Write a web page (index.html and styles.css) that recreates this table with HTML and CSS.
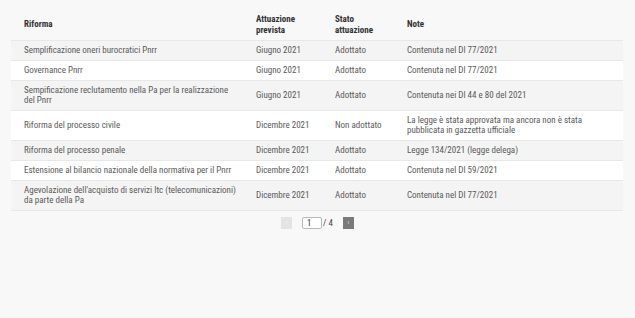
FILE: index.html
```html
<!DOCTYPE html>
<html lang="it">
<head>
<meta charset="utf-8">
<link rel="stylesheet" href="styles.css">
</head>
<body>
<div class="page">
  <table class="tbl">
    <colgroup>
      <col class="c1"><col class="c2"><col class="c3"><col class="c4">
    </colgroup>
    <thead>
      <tr><th>Riforma</th><th>Attuazione<br>prevista</th><th>Stato<br>attuazione</th><th>Note</th></tr>
    </thead>
    <tbody>
      <tr><td>Semplificazione oneri burocratici Pnrr</td><td>Giugno 2021</td><td>Adottato</td><td>Contenuta nel Dl 77/2021</td></tr>
      <tr><td>Governance Pnrr</td><td>Giugno 2021</td><td>Adottato</td><td>Contenuta nel Dl 77/2021</td></tr>
      <tr><td>Sempificazione reclutamento nella Pa per la realizzazione del Pnrr</td><td>Giugno 2021</td><td>Adottato</td><td>Contenuta nei Dl 44 e 80 del 2021</td></tr>
      <tr><td>Riforma del processo civile</td><td>Dicembre 2021</td><td>Non adottato</td><td>La legge è stata approvata ma ancora non è stata pubblicata in gazzetta ufficiale</td></tr>
      <tr><td>Riforma del processo penale</td><td>Dicembre 2021</td><td>Adottato</td><td>Legge 134/2021 (legge delega)</td></tr>
      <tr><td>Estensione al bilancio nazionale della normativa per il Pnrr</td><td>Dicembre 2021</td><td>Adottato</td><td>Contenuta nel Dl 59/2021</td></tr>
      <tr><td>Agevolazione dell'acquisto di servizi Itc (telecomunicazioni) da parte della Pa</td><td>Dicembre 2021</td><td>Adottato</td><td>Contenuta nel Dl 77/2021</td></tr>
    </tbody>
  </table>
  <div class="pager">
    <span class="btn prev">‹</span>
    <span class="pageinfo"><span class="input">1</span><span class="total">/ 4</span></span>
    <span class="btn next">›</span>
  </div>
</div>
</body>
</html>
```
FILE: styles.css
```css
html, body {
  margin: 0;
  background: #f8f8f8;
}
body {
  font-family: "Roboto Condensed", Roboto, "Liberation Sans Narrow", sans-serif;
  font-size: 9px;
  color: #5a5a5a;
}
.page {
  padding: 10px 12px 0 11px;
}
.tbl {
  width: 612px;
  border-collapse: collapse;
  table-layout: fixed;
}
.c1 { width: 232px; }
.c2 { width: 79px; }
.c3 { width: 72px; }
.c4 { width: 229px; }
.tbl th {
  text-align: left;
  font-weight: 700;
  color: #333;
  line-height: 10.5px;
  padding: 4px 8px 4.5px 13px;
  vertical-align: middle;
  border-bottom: 1px solid #e8e8e8;
}
.tbl td {
  line-height: 10px;
  padding: 4.5px 8px 4.5px 13px;
  vertical-align: middle;
  border-bottom: 1px solid #e8e8e8;
}
.tbl td:first-child { padding-right: 4px; }
.tbl td:last-child { padding-right: 26px; }
.tbl tbody tr:nth-child(odd) { background: #f4f4f4; }
.tbl tbody tr:nth-child(even) { background: #ffffff; }
.pager {
  display: flex;
  justify-content: center;
  align-items: center;
  gap: 10px;
  margin-top: 6px;
  padding-left: 1px;
}
.btn {
  width: 11px;
  height: 12px;
  display: flex;
  align-items: center;
  justify-content: center;
  font-size: 8px;
  line-height: 1;
}
.prev {
  background: #e4e4e4;
  color: #f4f4f4;
}
.next {
  background: #7a7a7a;
  color: #d8d8d8;
}
.pageinfo {
  display: flex;
  align-items: center;
  gap: 1px;
}
.input {
  box-sizing: border-box;
  width: 20px;
  height: 12px;
  border: 1px solid #b8b8b8;
  border-radius: 2px;
  background: #fff;
  color: #333;
  font-size: 8.5px;
  line-height: 10px;
  padding-left: 4px;
}
.total {
  color: #444;
  font-size: 9px;
}
```
